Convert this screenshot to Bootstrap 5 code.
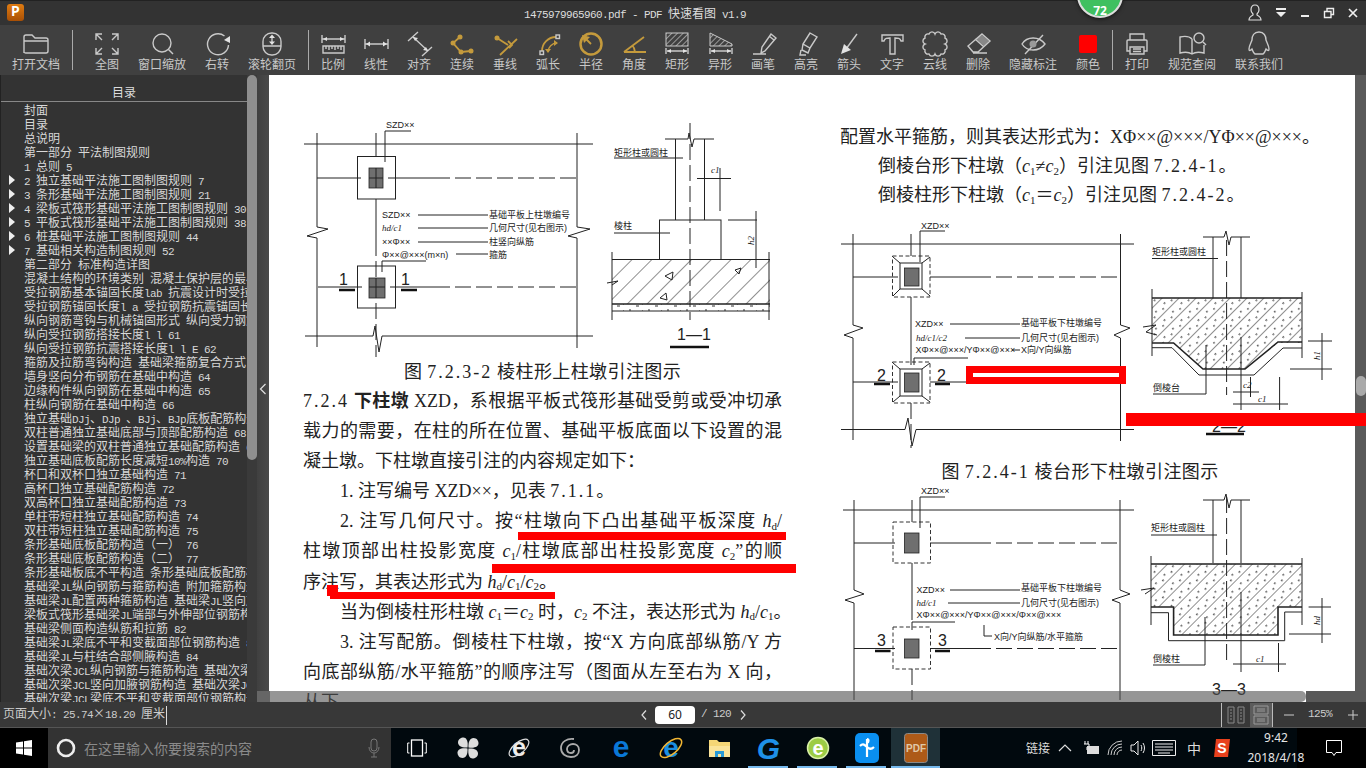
<!DOCTYPE html>
<html lang="zh-CN">

<head>
    <meta charset="UTF-8">
    <meta name="viewport" content="width=device-width, initial-scale=1.0">
    <title>PDF 快速看图</title>
    <link href="https://cdn.jsdelivr.net/npm/bootstrap@5.3.2/dist/css/bootstrap.min.css" rel="stylesheet">
    <style>
        html, body { height: 100%; }
        body { font-family: "Noto Sans CJK SC", sans-serif; font-size: 12px; background: #333; }
        .lat { font-family: "Liberation Mono", "Noto Sans CJK SC", monospace; font-size: 11px; letter-spacing: -.6px; }

        /* title bar */
        .tb-top { height: 25px; background: #333; border-top: 1px solid #222; color: #ddd; flex: none; position: relative; }
        .app-ico { width: 17px; height: 17px; margin: 3px 0 0 7px; border-radius: 3px; background: linear-gradient(#e07c12, #a84f05); color: #fff; font: bold 14px/17px "Liberation Mono", monospace; text-align: center; }
        .tb-title { margin-left: 500px; line-height: 24px; white-space: nowrap; }
        .badge-72 { position: absolute; left: 1077px; top: -29px; width: 46px; height: 46px; border-radius: 50%; background: #3fc060; border: 2px solid #ddd; box-shadow: 0 1px 4px rgba(0,0,0,.6); color: #fff; font: bold 12px "Noto Sans", sans-serif; text-align: center; padding-top: 28px; }
        .win-btns { gap: 12px; padding-right: 7px; }
        .win-btns svg { display: block; }

        /* toolbar */
        .tb-tools { height: 50px; background: #404040; flex: none; padding-left: 12px; }
        .tool-grp { display: flex; gap: 19px; margin-left: 12px; }
        .tool-grp.first { margin-left: 0; }
        .tool-grp.after-open { margin-left: 22px; }
        .tool { width: 24px; display: flex; flex-direction: column; align-items: center; padding-top: 6px; color: #c8c8c8; white-space: nowrap; }
        .tool.wide { width: 48px; }
        .tool svg { width: 30px; height: 24px; flex: none; overflow: visible; }
        .tool span { line-height: 16px; margin-top: 1px; }
        .tool-sep { width: 1px; height: 40px; margin: 5px 0 0 12px; background: #aaa; flex: none; }
        .ti { fill: none; stroke: #c9c9c9; stroke-width: 1.4; }
        .tg { fill: none; stroke: #c49a3c; stroke-width: 1.8; }
        .tg-thin { fill: none; stroke: #c49a3c; stroke-width: 1.4; }
        .tg-ring { fill: none; stroke: #c49a3c; stroke-width: 2.5; }
        .tgf { fill: #c49a3c; }
        .tf { fill: #e2e2e2; }

        /* main area */
        .main-area { flex: 1 1 0; min-height: 0; position: relative; overflow: hidden; }
        .side { width: 247px; flex: none; background: #333; border-left: 1px solid #222; color: #d8d8d8; display: flex; flex-direction: column; }
        .side-head { height: 27px; flex: none; border-bottom: 1px solid #888; text-align: center; padding-top: 8px; line-height: 17px; color: #ddd; }
        .toc { flex: 1 1 0; min-height: 0; overflow: hidden; margin-top: 1px; }
        .toc-row { height: 14px; line-height: 14px; white-space: nowrap; display: flex; overflow: hidden; }
        .toc-arr { width: 23px; flex: none; padding: 2px 0 0 8px; }
        .toc-arr.on::before { content: ""; display: block; width: 0; height: 0; border-left: 6px solid #eee; border-top: 5px solid transparent; border-bottom: 5px solid transparent; }
        .side-bar { width: 10px; flex: none; background: #3a3a3a; }
        .side-thumb { height: 385px; background: #8f8f8f; border-radius: 5px; }
        .gutter { width: 12px; flex: none; background: linear-gradient(90deg, #404040, #4a4a4a); }
        .doc-wrap { flex: 1 1 0; min-width: 0; position: relative; display: flex; }
        .page { flex: 1 1 0; min-width: 0; background: #fff; overflow: hidden; display: flex; padding-left: 34px; color: #222; font-family: "Liberation Serif", "Noto Sans CJK SC", serif; font-size: 18px; }
        .v-bar { width: 11px; flex: none; background: #5a5a5a; padding-top: 301px; }
        .v-thumb { height: 20px; margin-left: 1px; background: #aaa; border-radius: 5px; }
        .left-pane { width: 479px; flex: none; padding-top: 35px; }
        .right-pane { width: 515px; flex: none; margin-left: 58px; padding-top: 48px; }
        .fig { display: block; }
        .fig-cap { height: 22px; line-height: 22px; text-align: center; white-space: nowrap; letter-spacing: .4px; }
        .fig-cap.shift { padding-right: 35px; margin-bottom: 3px; }
        .num { letter-spacing: 2px; }
        .pg-lines { margin-top: 3px; }
        .pg-line { height: 30.1px; line-height: 30.1px; white-space: nowrap; text-align-last: justify; }
        .pg-line.end { text-align-last: left; }
        .pg-line.ind { padding-left: 37px; }
        .pg-line.short { height: 29px; line-height: 29px; text-align-last: left; }
        .pg-line.short.ind { padding-left: 38px; }
        .pg-line sub { font-size: 11px; }

        /* figure strokes */
        .ln { fill: none; stroke: #222; stroke-width: 1; }
        .ln2 { fill: none; stroke: #222; stroke-width: 1.6; }
        .lnd { fill: none; stroke: #222; stroke-width: 1; stroke-dasharray: 16 5; }
        .lnd2 { fill: none; stroke: #333; stroke-width: 1; stroke-dasharray: 4 2.5; }
        .sbar { fill: none; stroke: #111; stroke-width: 2.6; }
        .box-f { fill: #6f6f6f; stroke: #222; stroke-width: .8; }
        .ft { font-size: 9px; fill: #222; font-family: "Liberation Sans", "Noto Sans CJK SC", sans-serif; }
        .fti { font-size: 9px; fill: #222; font-family: "Liberation Serif", serif; font-style: italic; }
        .fsm { font-size: 16px; fill: #222; font-family: "Liberation Sans", sans-serif; }

        /* red pen marks laid over the page */
        .mk { position: absolute; background: #f00; }
        .mk-1 { left: 249px; top: 457px; width: 268px; height: 8px; }
        .mk-2 { left: 223px; top: 489px; width: 304px; height: 9px; }
        .mk-3 { left: 61px; top: 517px; width: 225px; height: 7px; }
        .mk-4 { left: 58px; top: 510px; width: 11px; height: 11px; }
        .mk-5 { left: 857px; top: 338px; width: 240px; height: 13px; }
        .mk-box { position: absolute; left: 697px; top: 291px; width: 160px; height: 18px; border: 7px solid #f00; background: #fff; }

        /* horizontal scrollbar */
        .h-bar { position: absolute; left: 257px; right: 0; bottom: 0; height: 11px; display: flex; }
        .h-gut { width: 13px; background: #666; }
        .h-thumb { width: 1036px; background: rgba(80, 80, 80, .6); border-radius: 0 5px 5px 0; }
        .h-rest { flex: 1 1 0; background: #595959; }

        /* status bar */
        .st-bar { height: 26px; flex: none; background: #383838; border-bottom: 1px solid #555; color: #ccc; }
        .st-left { width: 640px; flex: none; padding-left: 3px; white-space: nowrap; }
        .st-caret { display: inline-block; width: 1px; height: 19px; background: #ddd; vertical-align: middle; margin-left: 1px; }
        .pg-box { width: 40px; height: 18px; line-height: 18px; background: #fff; border-radius: 4px; color: #222; text-align: center; font-family: "Noto Sans", sans-serif; margin: 0 6px 0 7px; }
        .st-sep { width: 1px; height: 24px; background: #bbb; }
        .view-on { width: 22px; height: 24px; background: #5c5c5c; display: flex; align-items: center; justify-content: center; }
        .view-off { width: 28px; display: flex; justify-content: center; }
        .zoom-minus { margin-left: 11px; }
        .zoom-val { margin-left: 14px; }
        .zoom-plus { margin: 0 8px 0 16px; }

        /* windows taskbar */
        .task-bar { height: 40px; flex: none; color: #ddd; background: linear-gradient(90deg, #01090e 1297px, #000 1297px); }
        .start-btn { width: 48px; background: #000; }
        .search-box { width: 343px; background: #333; color: #8a8a8a; font-size: 14px; padding: 0 11px 0 8px; }
        .tk { width: 49px; height: 40px; flex: none; display: flex; align-items: center; justify-content: center; position: relative; }
        .tk.w51 { width: 51px; }
        .tk.run::after { content: ""; position: absolute; left: 4px; right: 5px; bottom: 0; height: 2px; background: #76b9ed; }
        .tk.act { background: #1f3138; }
        .tk.act::after { left: 0; right: 0; }
        .ic-txt { font-family: "Liberation Sans", sans-serif; font-weight: bold; }
        .g-logo { font-size: 30px; color: #1e90e8; font-style: italic; }
        .tray { height: 40px; display: flex; align-items: center; justify-content: center; flex: none; }
        .t22 { width: 22px; } .t24 { width: 24px; } .t26 { width: 26px; } .t28 { width: 28px; } .t30 { width: 30px; }
        .t-zh { font-size: 14px; }
        .t-note { width: 49px; padding-right: 16px; }
        .clock { width: 82px; flex: none; text-align: center; font: 12px/20px "Noto Sans", sans-serif; color: #e6e6e6; }
    </style>
</head>

<body class="d-flex flex-column overflow-hidden">

    <!-- title bar -->
    <div class="tb-top d-flex">
        <div class="app-ico">P</div>
        <div class="tb-title"><span class="lat">1475979965960.pdf - PDF </span>快速看图<span class="lat"> v1.9</span></div>
        <div class="badge-72">72</div>
        <div class="win-btns ms-auto d-flex align-items-center">
            <svg width="16" height="18" viewBox="0 0 16 18"><path d="M8 1C5 1 4 3 4 6c0 2 1 3 2 4v1c-2 1-4 2-4 5h12c0-3-2-4-4-5v-1c1-1 2-2 2-4 0-3-1-5-4-5z" fill="none" stroke="#ddd" stroke-width="1.2"/></svg>
            <svg width="12" height="10" viewBox="0 0 12 10"><path d="M1 0h10v2H1zM1 4h10L6 9z" fill="#eee"/></svg>
            <svg width="12" height="10" viewBox="0 0 12 10"><path d="M2 7h8v2H2z" fill="#eee"/></svg>
            <svg width="12" height="12" viewBox="0 0 12 12"><path d="M1.5 4.5H8v6H1.5zM4 4.5v-3h6.5v6H8" fill="none" stroke="#eee" stroke-width="1.4"/></svg>
            <svg width="12" height="12" viewBox="0 0 12 12"><path d="M2 2l8 8M10 2l-8 8" stroke="#eee" stroke-width="1.7"/></svg>
        </div>
    </div>

    <!-- tool bar -->
    <div class="tb-tools d-flex">
        <div class="tool-grp first">
            <div class="tool wide"><svg viewBox="0 0 30 24"><path class="ti" d="M3 22V6a2 2 0 0 1 2-2h6l3 3h11a2 2 0 0 1 2 2v11a2 2 0 0 1-2 2H5a2 2 0 0 1-2-1zM3 10h24"/></svg><span>打开文档</span></div>
        </div>
        <div class="tool-sep"></div>
        <div class="tool-grp after-open">
            <div class="tool"><svg viewBox="0 0 30 24"><path class="ti" d="M4 9V3h6M4 3l6 6M26 9V3h-6M26 3l-6 6M4 17v6h6M4 23l6-6M26 17v6h-6M26 23l-6-6"/></svg><span>全图</span></div>
            <div class="tool wide"><svg viewBox="0 0 30 24"><circle class="ti" cx="15" cy="12" r="9"/><path class="ti" d="M21.5 18.5L26 23"/></svg><span>窗口缩放</span></div>
            <div class="tool"><svg viewBox="0 0 30 24"><path class="ti" d="M22.5 5A10.5 10.5 0 1 0 26.5 14"/><path class="tf" d="M22 9l6 3V5z"/></svg><span>右转</span></div>
            <div class="tool wide"><svg viewBox="0 0 30 24"><rect class="ti" x="6" y="2" width="18" height="22" rx="8.5"/><path class="ti" d="M6 15h18M15 6v6"/><path class="tf" d="M15 3.5l3 3.5h-6zM15 14l3-3.5h-6z"/></svg><span>滚轮翻页</span></div>
        </div>
        <div class="tool-sep"></div>
        <div class="tool-grp">
            <div class="tool"><svg viewBox="0 0 30 24"><path class="ti" d="M4 4v8M27 4v8M4 8h23M5 15h21v7H5zM8 15v3M11 15v4M14 15v3M17 15v4M20 15v3M23 15v4"/><path class="tf" d="M5 8l4-2v4zM26 8l-4-2v4z"/></svg><span>比例</span></div>
            <div class="tool"><svg viewBox="0 0 30 24"><path class="ti" d="M4 8v10M27 8v10M4 13h23"/><path class="tf" d="M5 13l4-2.5v5zM26 13l-4-2.5v5z"/></svg><span>线性</span></div>
            <div class="tool"><svg viewBox="0 0 30 24"><path class="ti" d="M4 10L14 1M9 6l15 14M18 25l10-9"/><path class="tf" d="M9 6l5 1-3 3zM24 20l-5-1 3-3z"/></svg><span>对齐</span></div>
            <div class="tool"><svg viewBox="0 0 30 24"><path class="tg" d="M13 6L6 12l8 9 10-1"/><circle class="tgf" cx="13" cy="6" r="2.5"/><circle class="tgf" cx="6" cy="12" r="2.5"/><circle class="tgf" cx="14" cy="21" r="2.5"/><circle class="tgf" cx="24" cy="20" r="2.5"/></svg><span>连续</span></div>
            <div class="tool"><svg viewBox="0 0 30 24"><path class="tg" d="M7 7l11 7M27 8L10 24M18 10l4 4-3 3"/><circle class="tgf" cx="7" cy="7" r="2.5"/></svg><span>垂线</span></div>
            <div class="tool"><svg viewBox="0 0 30 24"><path class="tg" d="M9 20A14 14 0 0 1 23 6"/><path class="tg-thin" d="M15 21A9 9 0 0 1 24 12"/><rect class="ti" x="7" y="20" width="3.5" height="3.5"/><rect class="ti" x="23" y="4" width="3.5" height="3.5"/><path class="tgf" d="M25 12l-4-3v6zM15 22l-3-4h6z"/></svg><span>弧长</span></div>
            <div class="tool"><svg viewBox="0 0 30 24"><circle class="tg-ring" cx="15" cy="13" r="10.5"/><path class="tg" d="M15 13L9 7"/><path class="tgf" d="M6 4l8 2-6 6z"/></svg><span>半径</span></div>
            <div class="tool"><svg viewBox="0 0 30 24"><path class="tg" d="M5 21h22M5 21L25 6M16 21a11 11 0 0 0-3-7"/></svg><span>角度</span></div>
            <div class="tool"><svg viewBox="0 0 30 24"><defs><pattern id="ht0" width="4" height="4" patternUnits="userSpaceOnUse" patternTransform="rotate(45)"><path d="M0 0V4" stroke="#c0c0c0" stroke-width="1.4"/></pattern></defs><rect x="4" y="2" width="22" height="13" fill="url(#ht0)" stroke="#c9c9c9"/><path class="ti" d="M4 17v6M26 17v6M5 20h20"/><path class="tf" d="M5 20l4-2v4zM25 20l-4-2v4z"/></svg><span>矩形</span></div>
            <div class="tool"><svg viewBox="0 0 30 24"><path d="M5 2l22 11v2H5z" fill="url(#ht0)" stroke="#c9c9c9"/><path class="ti" d="M5 17v6M27 17v6M6 20h20"/><path class="tf" d="M6 20l4-2v4zM26 20l-4-2v4z"/></svg><span>异形</span></div>
            <div class="tool"><svg viewBox="0 0 30 24"><path class="ti" d="M5 23h13M13 22l1-6L23 3l5 4-11 13zM21 5l5 4"/></svg><span>画笔</span></div>
            <div class="tool"><svg viewBox="0 0 30 24"><path class="ti" d="M19 2l7 4-7 11-7-4zM12 13l-1 6 6 3 2-5M10 19l-1 5h6"/></svg><span>高亮</span></div>
            <div class="tool"><svg viewBox="0 0 30 24"><path class="ti" d="M23 3L12 18"/><path class="tf" d="M7 23l10-4-7-6z"/></svg><span>箭头</span></div>
            <div class="tool"><svg viewBox="0 0 30 24"><path class="ti" d="M5 4h21v6h-2c-1-3-3-3-6-3v16h-5V7c-3 0-5 0-6 3H5z"/></svg><span>文字</span></div>
            <div class="tool"><svg viewBox="0 0 30 24"><path class="ti" d="M9 3a3.2 3.2 0 0 1 6 0a3.2 3.2 0 0 1 6 0a3.2 3.2 0 0 1 4 4a3.2 3.2 0 0 1 0 6a3.2 3.2 0 0 1 0 6a3.2 3.2 0 0 1-4 4a3.2 3.2 0 0 1-6 0a3.2 3.2 0 0 1-6 0a3.2 3.2 0 0 1-4-4a3.2 3.2 0 0 1 0-6a3.2 3.2 0 0 1 0-6a3.2 3.2 0 0 1 4-4z"/></svg><span>云线</span></div>
            <div class="tool"><svg viewBox="0 0 30 24"><path fill="#888" d="M19 4l7 6-5 5-8-7z"/><path class="ti" d="M19 3l8 7-12 11h-5l-5-6zM12 8l9 8M10 22h14"/></svg><span>删除</span></div>
            <div class="tool wide"><svg viewBox="0 0 30 24"><path class="ti" d="M4 13C9 5 21 5 27 13 21 21 9 21 4 13zM25 4L7 23"/><circle cx="15" cy="13" r="3.5" fill="#999"/></svg><span>隐藏标注</span></div>
            <div class="tool"><svg viewBox="0 0 30 24"><rect x="6" y="4" width="18" height="18" rx="2" fill="#f00"/></svg><span>颜色</span></div>
        </div>
        <div class="tool-sep"></div>
        <div class="tool-grp">
            <div class="tool"><svg viewBox="0 0 30 24"><path class="ti" d="M8 9V3h14v6M8 20H5V10a1 1 0 0 1 1-1h18a1 1 0 0 1 1 1v10h-3M8 16h14v7H8zM11 18h8M11 20.5h8"/></svg><span>打印</span></div>
            <div class="tool wide"><svg viewBox="0 0 30 24"><path class="ti" d="M15 8C12 5 7 5 3 6V22C7 21 12 21 15 23 18 21 23 21 27 22V14M15 8V23"/><circle class="ti" cx="22" cy="7" r="5"/><path class="ti" d="M26 11l3 3"/></svg><span>规范查阅</span></div>
            <div class="tool wide"><svg viewBox="0 0 30 24"><path class="ti" d="M15 1C10 1 8 5 8 9 7 12 5 15 5 18c0 2 1 2 3 0 1 2 1 4 3 5h8c2-1 2-3 3-5 2 2 3 2 3 0 0-3-2-6-3-9 0-4-2-8-7-8z"/></svg><span>联系我们</span></div>
        </div>
    </div>

    <!-- outline, page, scrollbars -->
    <div class="main-area d-flex">
        <div class="side">
            <div class="side-head">目录</div>
            <div class="toc" id="tocList"></div>
        </div>
        <div class="side-bar"><div class="side-thumb"></div></div>
        <div class="gutter d-flex align-items-center justify-content-center">
            <svg width="8" height="12" viewBox="0 0 8 12"><path d="M6.5 1L1.5 6l5 5" fill="none" stroke="#ddd" stroke-width="1.3"/></svg>
        </div>
        <div class="doc-wrap">
            <div class="page">
                <div class="left-pane">
                    <svg class="fig" width="479" height="251" viewBox="303 110 479 251">
                        <defs>
                            <pattern id="ht1" width="14" height="14" patternUnits="userSpaceOnUse" patternTransform="rotate(45)"><path d="M0 0V14" stroke="#222"/></pattern>
                            <pattern id="ht2" width="12" height="12" patternUnits="userSpaceOnUse" patternTransform="rotate(45)"><path d="M0 0V12" stroke="#222"/><path d="M5 3h1.5M8 8h1.5" stroke="#333" stroke-width="1.5"/></pattern>
                            <pattern id="sp1" width="19" height="7" patternUnits="userSpaceOnUse"><path d="M2 2h2M9 5h3M15 3h1" stroke="#333"/></pattern>
                        </defs>
                        <path class="ln" d="M304 144H593M317 133V227L328 229 307 236 317 238V347M577 133V227L590 229 568 236 577 238V348M305 336H373L375 326 379 352 382 336H593"/>
                        <path class="ln" d="M376 133V156M376 199V240"/>
                        <path class="lnd" d="M376 240V357"/>
                        <rect class="ln" x="357.5" y="156.5" width="38" height="42.5"/>
                        <rect class="box-f" x="369" y="168" width="14" height="20"/>
                        <path class="ln" d="M317 178H361M388 178H434M369 178H383M376 168V188"/>
                        <path class="lnd" d="M434 178H577"/>
                        <text class="ft" x="386" y="128">SZD××</text>
                        <path class="ln" d="M385 131H411M385 131V162"/>
                        <rect class="ln" x="357.5" y="266" width="38" height="42"/>
                        <rect class="box-f" x="369" y="278" width="16" height="20"/>
                        <path class="ln" d="M318 287H362M390 287H434M369 287H385M376 278V298"/>
                        <path class="lnd" d="M434 287H577"/>
                        <text class="fsm" x="339" y="285">1</text>
                        <text class="fsm" x="401" y="285">1</text>
                        <path class="sbar" d="M339 290H355M401 290H417"/>
                        <text class="ft" x="382" y="218">SZD××</text>
                        <text class="fti" x="382" y="231">hd/c1</text>
                        <text class="ft" x="382" y="245">××Φ××</text>
                        <text class="ft" x="382" y="258">Φ××@×××(m×n)</text>
                        <path class="ln" d="M418 215H488M418 228H488M418 242H488M456 254H488M382 272V261H426"/>
                        <text class="ft" x="489" y="218">基础平板上柱墩编号</text>
                        <text class="ft" x="489" y="231">几何尺寸(见右图示)</text>
                        <text class="ft" x="489" y="245">柱竖向纵筋</text>
                        <text class="ft" x="489" y="258">箍筋</text>
                        <!-- section 1-1 -->
                        <path class="lnd" d="M690 123V320"/>
                        <path class="ln" d="M675.5 139V220M704.5 139V220M665 139H688L689 133 692 147 694 139H714"/>
                        <text class="ft" x="614" y="156">矩形柱或圆柱</text>
                        <path class="ln" d="M614 158H683M697 178.5H731M720 168V211"/>
                        <text class="fti" x="711" y="173">c1</text>
                        <rect class="ln" x="659.5" y="220" width="61.5" height="39.5"/>
                        <path class="ln" d="M728 220H757M756 211V268"/>
                        <text class="fti" transform="rotate(-90 753 240)" x="748" y="241">h2</text>
                        <text class="ft" x="614" y="229">棱柱</text>
                        <path class="ln" d="M614 233H670"/>
                        <rect x="612" y="259.5" width="158" height="44.5" fill="url(#ht1)"/>
                        <rect x="612" y="304" width="158" height="7" fill="url(#sp1)"/>
                        <path class="ln" d="M612 259.5H770M612 252V320M769 252V320M607 283L618 281 612 285"/>
                        <path class="ln2" d="M612 304H770"/>
                        <path class="ln" d="M612 311H770M665 276l8-4-1 8zM660 298l6-5 1 7zM735 270l6-2-2 6z"/>
                        <text class="fsm" x="677" y="340">1—1</text>
                        <path class="sbar" d="M670 347H709"/>
                    </svg>
                    <div class="fig-cap">图 <span class="num">7.2.3-2</span> 棱柱形上柱墩引注图示</div>
                    <div class="pg-lines">
                        <div class="pg-line"><span class="num">7.2.4</span> <b>下柱墩</b> XZD&#xFF0C;系根据平板式筏形基础受剪或受冲切承</div>
                        <div class="pg-line">载力的需要&#xFF0C;在柱的所在位置、基础平板底面以下设置的混</div>
                        <div class="pg-line end">凝土墩。下柱墩直接引注的内容规定如下&#xFF1A;</div>
                        <div class="pg-line end ind">1. 注写编号 XZD××&#xFF0C;见表 <span class="num">7.1.1</span>。</div>
                        <div class="pg-line ind">2. 注写几何尺寸。按“柱墩向下凸出基础平板深度 <i>h</i><sub>d</sub>/</div>
                        <div class="pg-line">柱墩顶部出柱投影宽度 <i>c</i><sub>1</sub>/柱墩底部出柱投影宽度 <i>c</i><sub>2</sub>”的顺</div>
                        <div class="pg-line end">序注写&#xFF0C;其表达形式为 <i>h</i><sub>d</sub>/<i>c</i><sub>1</sub>/<i>c</i><sub>2</sub>。</div>
                        <div class="pg-line ind">当为倒棱柱形柱墩 <i>c</i><sub>1</sub>&#xFF1D;<i>c</i><sub>2</sub> 时&#xFF0C;<i>c</i><sub>2</sub> 不注&#xFF0C;表达形式为 <i>h</i><sub>d</sub>/<i>c</i><sub>1</sub>。</div>
                        <div class="pg-line ind">3. 注写配筋。倒棱柱下柱墩&#xFF0C;按“X 方向底部纵筋/Y 方</div>
                        <div class="pg-line">向底部纵筋/水平箍筋”的顺序注写&#xFF08;图面从左至右为 X 向&#xFF0C;</div>
                        <div class="pg-line end">从下</div>
                    </div>
                </div>
                <div class="right-pane">
                    <div class="pg-line short">配置水平箍筋&#xFF0C;则其表达形式为&#xFF1A;XΦ××@×××/YΦ××@×××。</div>
                    <div class="pg-line short ind">倒棱台形下柱墩&#xFF08;<i>c</i><sub>1</sub>≠<i>c</i><sub>2</sub>&#xFF09;引注见图 <span class="num">7.2.4-1</span>。</div>
                    <div class="pg-line short ind">倒棱柱形下柱墩&#xFF08;<i>c</i><sub>1</sub>&#xFF1D;<i>c</i><sub>2</sub>&#xFF09;引注见图 <span class="num">7.2.4-2</span>。</div>
                    <svg class="fig" width="515" height="251" viewBox="840 210 515 251">
                        <path class="ln" d="M841 244H1134M853 234V325L863 328 844 335 853 338V440M1120.5 234V325L1130 328 1114 335 1120.5 338V441M841 429.5H905L908 418 912 446 916 429.5H1134"/>
                        <path class="ln" d="M911 234V256M911 297V365"/>
                        <path class="lnd" d="M911 403V448"/>
                        <rect class="lnd2" x="892.5" y="256" width="37.5" height="41"/>
                        <rect class="ln" x="900" y="263" width="22" height="26"/>
                        <rect class="box-f" x="904.5" y="268" width="14.5" height="18"/>
                        <path class="ln" d="M893 257l7 6M930 257l-8 6M893 296l7-7M930 296l-8-7M853 277H898M930 277H975"/>
                        <path class="lnd" d="M975 277H1120"/>
                        <text class="ft" x="921" y="229">XZD××</text>
                        <path class="ln" d="M920 231H945M920 231V262"/>
                        <rect class="lnd2" x="892.5" y="362" width="37.5" height="41"/>
                        <rect class="ln" x="900" y="369" width="22" height="27"/>
                        <rect class="box-f" x="904.5" y="373" width="14.5" height="19"/>
                        <path class="ln" d="M893 363l7 6M930 363l-8 6M893 402l7-6M930 402l-8-6M853 382H898M930 382H966"/>
                        <text class="fsm" x="877" y="381">2</text>
                        <text class="fsm" x="937" y="381">2</text>
                        <path class="sbar" d="M874 384H890M935 384H950"/>
                        <text class="ft" x="915" y="327">XZD××</text>
                        <text class="fti" x="916" y="341">hd/c1/c2</text>
                        <text class="ft" x="915.5" y="353">XΦ××@×××/YΦ××@×××</text>
                        <path class="ln" d="M950 324H1020M965 338H1020M1012 350H1020M914 358H968M914 358V365"/>
                        <text class="ft" x="1021" y="326">基础平板下柱墩编号</text>
                        <text class="ft" x="1021" y="341">几何尺寸(见右图示)</text>
                        <text class="ft" x="1021" y="353">X向/Y向纵筋</text>
                        <!-- section 2-2 -->
                        <path class="ln" d="M1203 237H1224L1226 231 1229 245 1231 237H1250M1213 237V298M1241 237V298"/>
                        <text class="ft" x="1152" y="255">矩形柱或圆柱</text>
                        <path class="ln" d="M1152 258.5H1218"/>
                        <path d="M1152 298H1302V343H1278L1245 369H1203L1173.6 343H1152z" fill="url(#ht2)"/>
                        <path class="lnd" d="M1226.6 240V395"/>
                        <path class="ln2" d="M1152 298H1302M1152 343H1173.6L1203 369H1245L1278 342H1302"/>
                        <path class="ln" d="M1152 347.7H1172L1199 375H1254L1283 348H1302M1152 289V356M1302 292V358M1143 327L1156 325 1146 332 1157 335"/>
                        <text class="ft" x="1153" y="391">倒棱台</text>
                        <path class="ln" d="M1153 394H1206M1206 345V394M1322 333V380M1308 341H1332M1290 369H1332M1241 337V410M1250.5 377V397M1233 392H1259M1233 404H1288M1279.6 377V410"/>
                        <text class="fti" transform="rotate(-90 1319 355)" x="1314" y="356">h1</text>
                        <text class="fti" x="1243" y="388">c2</text>
                        <text class="fti" x="1258" y="402">c1</text>
                        <text class="fsm" x="1212" y="432">2—2</text>
                        <path class="sbar" d="M1206 434H1244"/>
                    </svg>
                    <div class="fig-cap shift">图 <span class="num">7.2.4-1</span> 棱台形下柱墩引注图示</div>
                    <svg class="fig" width="515" height="220" viewBox="840 486 515 220">
                        <path class="ln" d="M843 510H1134M854 500V590L864 594 845 600 854 603V700M1120 500V590L1130 594 1112 600 1120 603V700M912 500V522M912 563V620"/>
                        <path class="lnd" d="M912 669V700"/>
                        <rect class="lnd2" x="893" y="522" width="37.5" height="41"/>
                        <rect class="box-f" x="904.5" y="533" width="14.5" height="20"/>
                        <path class="ln" d="M854 543H895M930 543H975"/>
                        <path class="lnd" d="M975 543H1120"/>
                        <text class="ft" x="921" y="494">XZD××</text>
                        <path class="ln" d="M920 497H945M920 497V528"/>
                        <text class="ft" x="916.5" y="593">XZD××</text>
                        <text class="fti" x="916.5" y="606">hd/c1</text>
                        <text class="ft" x="916.5" y="618">XΦ××@×××/YΦ××@×××/Φ××@×××</text>
                        <path class="ln" d="M950 590H1020M948 603H1020M984 625V636H992M912 622H955M912 622V630"/>
                        <text class="ft" x="1021" y="591">基础平板下柱墩编号</text>
                        <text class="ft" x="1021" y="606">几何尺寸(见右图示)</text>
                        <text class="ft" x="994" y="640">X向/Y向纵筋/水平箍筋</text>
                        <rect class="lnd2" x="893" y="627" width="37.5" height="42"/>
                        <rect class="box-f" x="904.5" y="639" width="14.5" height="19"/>
                        <path class="ln" d="M854 648.5H895M930 648.5H975"/>
                        <path class="lnd" d="M975 648.5H1120"/>
                        <text class="fsm" x="877" y="646">3</text>
                        <text class="fsm" x="938" y="646">3</text>
                        <path class="sbar" d="M875 651H890.5M935 651H950"/>
                        <!-- section 3-3 -->
                        <path class="ln" d="M1203 500H1224L1226 494 1229 508 1231 500H1250M1213 500V563M1241 500V563"/>
                        <text class="ft" x="1151" y="531">矩形柱或圆柱</text>
                        <path class="ln" d="M1151 535H1217"/>
                        <path d="M1151 564H1302V607H1278V635H1173.6V607H1151z" fill="url(#ht2)"/>
                        <path class="lnd" d="M1226.6 497V660"/>
                        <path class="ln2" d="M1151 564H1302M1151 607H1173.6V635H1278V607H1302"/>
                        <path class="ln" d="M1151 612.7H1168.5V640.7H1284.7V612H1302M1151 556V625M1302 558V625M1141 590L1154 588 1145 594"/>
                        <text class="ft" x="1153" y="662">倒棱柱</text>
                        <path class="ln" d="M1153 665H1205M1205 617V665M1322 598V643M1308.6 607H1331M1289 634H1331M1233 664H1286M1241 592V672M1278.5 643V672"/>
                        <text class="fti" transform="rotate(-90 1319 620)" x="1314" y="621">hd</text>
                        <text class="fti" x="1256" y="662">c1</text>
                        <text class="fsm" x="1212" y="695">3—3</text>
                    </svg>
                </div>
            </div>
            <div class="v-bar"><div class="v-thumb"></div></div>
            <!-- hand drawn marks -->
            <div class="mk mk-1"></div>
            <div class="mk mk-2"></div>
            <div class="mk mk-3"></div>
            <div class="mk mk-4"></div>
            <div class="mk mk-5"></div>
            <div class="mk-box"></div>
        </div>
        <div class="h-bar"><div class="h-gut"></div><div class="h-thumb"></div><div class="h-rest"></div></div>
    </div>

    <!-- status bar -->
    <div class="st-bar d-flex align-items-center">
        <div class="st-left">页面大小<span class="lat">: 25.74</span>×<span class="lat">18.20 </span>厘米<span class="st-caret"></span></div>
        <svg width="8" height="12" viewBox="0 0 8 12"><path d="M6 1.5L2 6l4 4.5" fill="none" stroke="#ddd" stroke-width="1.2"/></svg>
        <div class="pg-box">60</div>
        <span class="lat">/ 120</span>
        <svg class="ms-2" width="8" height="12" viewBox="0 0 8 12"><path d="M2 1.5L6 6l-4 4.5" fill="none" stroke="#ddd" stroke-width="1.2"/></svg>
        <div class="ms-auto d-flex align-items-center">
            <div class="st-sep"></div>
            <div class="view-off"><svg width="18" height="18" viewBox="0 0 18 18"><path d="M1 1h6v16H1zM11 1h6v16h-6zM3 4h2M3 7h2M3 10h2M3 13h2M13 4h2M13 7h2M13 10h2M13 13h2" fill="none" stroke="#888"/></svg></div>
            <div class="view-on"><svg width="16" height="20" viewBox="0 0 16 20"><path d="M1 1h14v8H1zM1 11h14v8H1zM4 4h8M4 6h8M4 14h8M4 16h8" fill="none" stroke="#999"/></svg></div>
            <div class="st-sep"></div>
            <svg class="zoom-minus" width="10" height="10" viewBox="0 0 10 10"><path d="M0 5h10" stroke="#ccc"/></svg>
            <span class="lat zoom-val">125%</span>
            <svg class="zoom-plus" width="10" height="10" viewBox="0 0 10 10"><path d="M0 5h10M5 0v10" stroke="#ccc"/></svg>
        </div>
    </div>

    <!-- windows taskbar -->
    <div class="task-bar d-flex">
        <div class="start-btn d-flex align-items-center justify-content-center">
            <svg width="16" height="16" viewBox="0 0 16 16"><path d="M0 2.5l7-1v6H0zM8 1.3L16 0v7.5H8zM0 8.5h7v6l-7-1zM8 8.5h8V16l-8-1.3z" fill="#fff"/></svg>
        </div>
        <div class="search-box d-flex align-items-center">
            <svg width="20" height="20" viewBox="0 0 20 20" class="me-2"><circle cx="10" cy="10" r="8" fill="none" stroke="#eee" stroke-width="2.6"/></svg>
            <span>在这里输入你要搜索的内容</span>
            <svg class="ms-auto" width="12" height="20" viewBox="0 0 12 20"><rect x="3" y="1" width="6" height="12" rx="3" fill="none" stroke="#777"/><path d="M1 9c0 8 10 8 10 0M6 15v4M3 19h6" fill="none" stroke="#777"/></svg>
        </div>
        <div class="tk w51"><svg width="20" height="18" viewBox="0 0 20 18"><rect x="4.5" y="1" width="11" height="16" fill="none" stroke="#fff" stroke-width="1.3"/><path d="M2.5 4H.7v10h1.8M17.5 4h1.8v10h-1.8" fill="none" stroke="#fff"/></svg></div>
        <div class="tk w51"><svg width="22" height="22" viewBox="0 0 22 22"><g fill="#ddd"><path d="M10.5 10.5C5 11 1 9 1 5.5S4 .5 6.5.5s5 3 4 10z"/><path d="M11.5 10.5C11 5 13 1 16.5 1s5 3 5 5.5-3 5-10 4z"/><path d="M11.5 11.5C17 11 21 13 21 16.5s-3 5-5.5 5-5-3-4-10z"/><path d="M10.5 11.5C11 17 9 21 5.5 21S.5 18 .5 15.5s3-5 10-4z"/></g></svg></div>
        <div class="tk w51"><svg width="24" height="26" viewBox="0 0 24 26"><text class="ic-txt" x="12" y="21" font-size="25" text-anchor="middle" fill="#eee">e</text><ellipse cx="12" cy="13" rx="12" ry="5.5" transform="rotate(-40 12 13)" fill="none" stroke="#ddd" stroke-width="1.2"/></svg></div>
        <div class="tk w51"><svg width="22" height="22" viewBox="0 0 22 22"><path d="M15 2C8 1 2 5 2 11s5 9 10 9 8-3 8-7-3-6-6-6-6 2-6 5 2 4 4 4 3-1 3-3" fill="none" stroke="#aaa" stroke-width="1.8"/></svg></div>
        <div class="tk w51"><svg width="24" height="26" viewBox="0 0 24 26"><text class="ic-txt" x="12" y="22" font-size="30" text-anchor="middle" fill="#0a78d7">e</text></svg></div>
        <div class="tk"><svg width="26" height="26" viewBox="0 0 26 26"><text class="ic-txt" x="13" y="22" font-size="28" text-anchor="middle" fill="#1b8ee0">e</text><ellipse cx="13" cy="13" rx="13" ry="6" transform="rotate(-40 13 13)" fill="none" stroke="#f2b632" stroke-width="1.5"/></svg></div>
        <div class="tk"><svg width="22" height="20" viewBox="0 0 22 20"><path d="M0 2h8l2 2h11v15H0z" fill="#f5d676"/><path d="M0 8h21v11H0z" fill="#fbe49a"/><path d="M6 19v-6h9v6h-3v-3H9v3z" fill="#2a9ad6"/></svg></div>
        <div class="tk run"><span class="ic-txt g-logo">G</span></div>
        <div class="tk run"><svg width="24" height="26" viewBox="0 0 24 26"><circle cx="12" cy="13" r="10.5" fill="#9ccc45" stroke="#d9f0a8" stroke-width="1.5"/><text class="ic-txt" x="12" y="20" font-size="20" text-anchor="middle" fill="#fff">e</text></svg></div>
        <div class="tk run"><svg width="24" height="30" viewBox="0 0 24 30"><rect width="24" height="30" rx="5" fill="#0a8ff0"/><path d="M12 6v18M5 13c3-3 5-1 7 1s4 3 7 0M12 6c2 0 2 3 0 4" fill="none" stroke="#fff" stroke-width="2.2"/></svg></div>
        <div class="tk run act"><svg width="24" height="30" viewBox="0 0 24 30"><rect x=".5" y=".5" width="23" height="29" rx="3" fill="#ad5a18" stroke="#8a8a8a"/><text class="ic-txt" x="12" y="19" font-size="10" text-anchor="middle" fill="#e0c8a8">PDF</text></svg></div>
        <div class="flex-grow-1"></div>
        <div class="tray t26">链接</div>
        <div class="tray t28"><svg width="14" height="8" viewBox="0 0 14 8"><path d="M1 7l6-6 6 6" fill="none" stroke="#ddd" stroke-width="1.2"/></svg></div>
        <div class="tray t24"><svg width="18" height="14" viewBox="0 0 18 14"><path d="M3 0v3M6 0v3M2 3h5v3H5v3" fill="none" stroke="#fff"/><rect x="5" y="5" width="12" height="8" fill="#ddd"/></svg></div>
        <div class="tray t24"><svg width="16" height="16" viewBox="0 0 16 16"><path d="M1 15A14 14 0 0 1 15 1M4 15A11 11 0 0 1 15 4M7 15a8 8 0 0 1 8-8M10 15a5 5 0 0 1 5-5" fill="none" stroke="#ccc"/></svg></div>
        <div class="tray t22"><svg width="16" height="16" viewBox="0 0 16 16"><path d="M1 5h3l4-4v14l-4-4H1zM11 5c1 2 1 4 0 6M13 3c2 3 2 7 0 10" fill="none" stroke="#eee"/></svg></div>
        <div class="tray t30"><svg width="24" height="16" viewBox="0 0 24 16"><path d="M.5.5h23v15H.5zM3 4h18M3 7h18M3 10h18M6 13h12" fill="none" stroke="#eee"/></svg></div>
        <div class="tray t30 t-zh">中</div>
        <div class="tray t26"><svg width="18" height="20" viewBox="0 0 18 20"><path d="M3 1h14l-2 18H1z" fill="#e8401c"/><text class="ic-txt" x="9" y="15" font-size="14" text-anchor="middle" fill="#fff">S</text></svg></div>
        <div class="clock">9:42<br>2018/4/18</div>
        <div class="tray t-note"><svg width="16" height="16" viewBox="0 0 16 16"><path d="M.5.5h15v12H10l-2 3-2-3H.5z" fill="none" stroke="#fff"/></svg></div>
    </div>

    <script>
        const tocRows = [
            "封面", "目录", "总说明", "第一部分 平法制图规则", "1 总则 5",
            ">2 独立基础平法施工图制图规则 7", ">3 条形基础平法施工图制图规则 21",
            ">4 梁板式筏形基础平法施工图制图规则 30", ">5 平板式筏形基础平法施工图制图规则 38",
            ">6 桩基础平法施工图制图规则 44", ">7 基础相关构造制图规则 52",
            "第二部分 标准构造详图", "混凝土结构的环境类别 混凝土保护层的最小厚度 54",
            "受拉钢筋基本锚固长度lab 抗震设计时受拉钢筋基本锚固长度", "受拉钢筋锚固长度l a 受拉钢筋抗震锚固长度 l aE",
            "纵向钢筋弯钩与机械锚固形式 纵向受力钢筋搭接区箍筋构造", "纵向受拉钢筋搭接长度l l 61",
            "纵向受拉钢筋抗震搭接长度l l E 62", "箍筋及拉筋弯钩构造 基础梁箍筋复合方式 63",
            "墙身竖向分布钢筋在基础中构造 64", "边缘构件纵向钢筋在基础中构造 65", "柱纵向钢筋在基础中构造 66",
            "独立基础DJj、DJp 、BJj、BJp底板配筋构造 67", "双柱普通独立基础底部与顶部配筋构造 68",
            "设置基础梁的双柱普通独立基础配筋构造 69", "独立基础底板配筋长度减短10%构造 70",
            "杯口和双杯口独立基础构造 71", "高杯口独立基础配筋构造 72", "双高杯口独立基础配筋构造 73",
            "单柱带短柱独立基础配筋构造 74", "双柱带短柱独立基础配筋构造 75",
            "条形基础底板配筋构造\uFF08一\uFF09 76", "条形基础底板配筋构造\uFF08二\uFF09 77",
            "条形基础板底不平构造 条形基础底板配筋构造 78", "基础梁JL纵向钢筋与箍筋构造 附加箍筋构造 79",
            "基础梁JL配置两种箍筋构造 基础梁JL竖向加腋钢筋构造 80", "梁板式筏形基础梁JL端部与外伸部位钢筋构造 81",
            "基础梁侧面构造纵筋和拉筋 82", "基础梁JL梁底不平和变截面部位钢筋构造 83", "基础梁JL与柱结合部侧腋构造 84",
            "基础次梁JCL纵向钢筋与箍筋构造 基础次梁端部外伸部位钢筋构造 85",
            "基础次梁JCL竖向加腋钢筋构造 基础次梁JCL配置两种箍筋构造 86", "基础次梁JCL梁底不平和变截面部位钢筋构造 87"
        ];

        // latin runs are half width in the outline, same as the song face of the app
        const tocList = document.getElementById("tocList");
        tocRows.forEach(row => {
            const open = row.startsWith(">");
            const text = (open ? row.slice(1) : row).replace(/[\x20-\x7e]+/g, m => `<span class="lat">${m}</span>`);
            tocList.innerHTML += `<div class="toc-row"><span class="toc-arr ${open ? "on" : ""}"></span><span>${text}</span></div>`;
        });
    </script>
    <script src="https://cdn.jsdelivr.net/npm/bootstrap@5.3.2/dist/js/bootstrap.bundle.min.js"></script>
</body>

</html>
